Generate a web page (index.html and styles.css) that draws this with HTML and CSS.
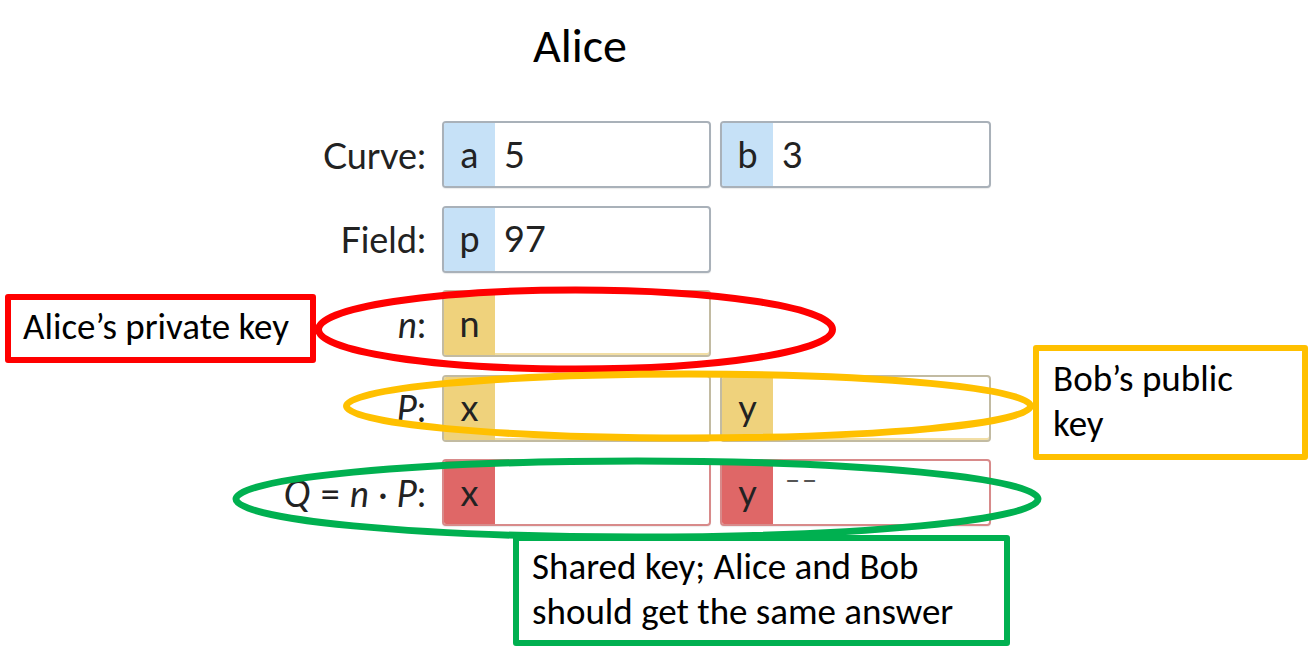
FILE: index.html
```html
<!DOCTYPE html>
<html lang="en">
<head>
<meta charset="utf-8">
<title>Alice</title>
<link rel="stylesheet" href="styles.css">
</head>
<body>
<div class="slide">
  <h1 class="title">Alice</h1>
  <div class="form">
    <div class="label">Curve:</div>
    <div class="field blue"><span class="pre">a</span><span class="val">5</span></div>
    <div class="field blue"><span class="pre">b</span><span class="val">3</span></div>

    <div class="label">Field:</div>
    <div class="field blue"><span class="pre">p</span><span class="val">97</span></div>

    <div class="label"><i>n</i>:</div>
    <div class="field gold"><span class="pre">n</span><span class="val"></span></div>

    <div class="label"><i>P</i>:</div>
    <div class="field gold"><span class="pre">x</span><span class="val"></span></div>
    <div class="field gold"><span class="pre">y</span><span class="val"></span></div>

    <div class="label"><i>Q</i> = <i>n</i> · <i>P</i>:</div>
    <div class="field red"><span class="pre">x</span><span class="val"></span></div>
    <div class="field red"><span class="pre">y</span><span class="val ph">‒‒</span></div>
  </div>

  <svg class="marks" width="1310" height="658" viewBox="0 0 1310 658" aria-hidden="true">
    <ellipse cx="575.5" cy="329.5" rx="257" ry="39.5" fill="none" stroke="#ff0000" stroke-width="7"/>
    <ellipse cx="688.5" cy="406" rx="342" ry="32" fill="none" stroke="#ffc000" stroke-width="7"/>
    <ellipse cx="637" cy="499" rx="401" ry="38" fill="none" stroke="#00b050" stroke-width="7"/>
  </svg>

  <div class="note note-red">Alice’s private key</div>
  <div class="note note-gold">Bob’s public<br>key</div>
  <div class="note note-green">Shared key; Alice and Bob<br>should get the same answer</div>
</div>
</body>
</html>
```

FILE: styles.css
```css
* { box-sizing: border-box; }

html, body {
  margin: 0;
  padding: 0;
  background: #ffffff;
}

.slide {
  position: relative;
  width: 1310px;
  height: 658px;
  overflow: hidden;
  font-family: Carlito, Lato, "Open Sans", sans-serif;
  color: #000;
}

.title {
  margin: 0;
  padding: 19px 0 0 533px;
  font-family: Carlito, Lato, sans-serif;
  font-weight: 400;
  font-size: 48px;
  line-height: 54px;
  color: #000;
}

.form {
  display: grid;
  grid-template-columns: 433px 269px 271px;
  grid-auto-rows: 67px;
  column-gap: 9px;
  row-gap: 17.5px;
  margin-top: 48px;
  font-family: Lato, "Open Sans", sans-serif;
  font-size: 36px;
  color: #222;
}

.label {
  grid-column: 1;
  display: flex;
  align-items: center;
  justify-content: flex-end;
  padding-right: 7px;
  white-space: pre;
}

.label i { font-style: italic; }

.field {
  display: flex;
  align-items: stretch;
  border: 2px solid #a9b1b9;
  border-radius: 4px;
  background: #fff;
  overflow: hidden;
  box-shadow: 0 1px 1px rgba(0,0,0,0.08);
}

.pre {
  width: 51px;
  flex: none;
  display: flex;
  align-items: center;
  justify-content: center;
  padding-bottom: 2px;
}

.val {
  flex: 1;
  display: flex;
  align-items: center;
  padding-left: 9px;
  padding-bottom: 2px;
}

.blue .pre { background: #c6e1f7; }

.gold { border-color: #c2bba2; box-shadow: inset 0 -2px 0 #f2dea4; }
.gold .pre { background: #efd27c; }

.red { border-color: #d88a8a; }
.red .pre { background: #df6767; }

.ph {
  align-items: flex-start;
  padding-top: 4px;
  padding-left: 12px;
  font-size: 28px;
  line-height: 1;
  letter-spacing: 2px;
  color: #555;
}

.marks {
  position: absolute;
  left: 0;
  top: 0;
  pointer-events: none;
}

.note {
  position: absolute;
  background: #fff;
  border: 6.5px solid;
  border-radius: 3px;
  font-family: Carlito, Lato, sans-serif;
  font-size: 37px;
  line-height: 45px;
  color: #000;
  white-space: nowrap;
}

.note-red {
  left: 5px;
  top: 294px;
  width: 311px;
  height: 69px;
  padding: 4px 0 0 12px;
  border-color: #ff0000;
}

.note-gold {
  left: 1033px;
  top: 345px;
  width: 275px;
  height: 115px;
  padding: 5px 0 0 14px;
  border-color: #ffc000;
}

.note-green {
  left: 513px;
  top: 535px;
  width: 497px;
  height: 111px;
  padding: 3px 0 0 13px;
  border-color: #00b050;
}
```
